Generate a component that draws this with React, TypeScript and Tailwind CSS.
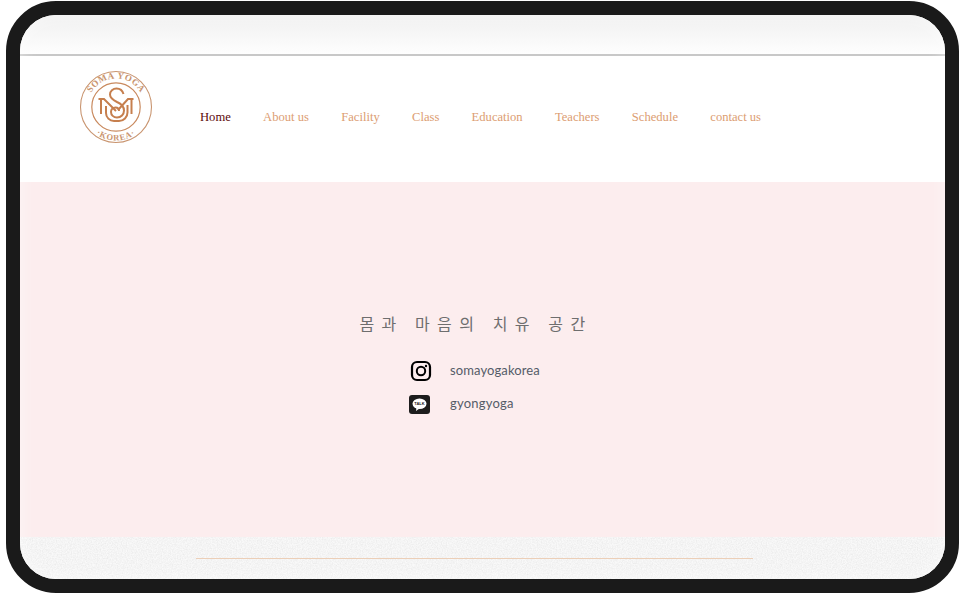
const navItems = ["About us", "Facility", "Class", "Education", "Teachers", "Schedule", "contact us"];

function Logo() {
  return (
    <svg width="76" height="76" viewBox="0 0 76 76" fill="none" stroke="#c99570" className="block">
      <defs>
        <path id="topArc" d="M 9.5 38 A 28.5 28.5 0 0 1 66.5 38" />
        <path id="botArc" d="M 4.5 38 A 33.5 33.5 0 0 0 71.5 38" />
      </defs>
      <circle cx="38" cy="38" r="35.5" strokeWidth="1.1" />
      <circle cx="38" cy="38" r="24.2" strokeWidth="1.2" stroke="#c98a5f" />
      <text fontFamily="'Liberation Serif', serif" fontSize="9" fontWeight="700" fill="#c99570" stroke="none" letterSpacing="0.5">
        <textPath href="#topArc" startOffset="50%" textAnchor="middle">SOMA YOGA</textPath>
      </text>
      <text fontFamily="'Liberation Serif', serif" fontSize="8.5" fontWeight="700" fill="#c99570" stroke="none" letterSpacing="0.8">
        <textPath href="#botArc" startOffset="50%" textAnchor="middle">·KOREA·</textPath>
      </text>
      <g stroke="#c67f4e" strokeWidth="2">
        <path d="M20.5 30 H26 L38 42 M23 30 V45 M55.5 30 H50 L40 41 M53.5 30 V45" />
        <path d="M28 37 V44 A8 8 0 0 0 36 52 H41 A8.5 8.5 0 0 0 49.5 43.5 V36" />
        <path d="M45.5 25 C44.5 21.5 42 19.5 38.5 19.5 C35 19.5 32 22 32 25.5 C32 29 35 31 39 33 C43.5 35 46 38 46 41.5 C46 45.5 43 48.5 39 48.5 C35.5 48.5 33 46 33 43 C33 40.5 35 38.5 37.5 38.5 C39.5 38.5 41 40 41 42" />
      </g>
    </svg>
  );
}

function Instagram() {
  return (
    <svg width="22" height="22" viewBox="0 0 22 22" fill="none" stroke="#000" className="block">
      <rect x="2" y="2" width="18" height="18" rx="5" strokeWidth="2.2" />
      <circle cx="11" cy="11" r="4.2" strokeWidth="2" />
      <circle cx="16" cy="6" r="1.2" fill="#000" stroke="none" />
    </svg>
  );
}

function Kakao() {
  return (
    <div className="relative w-[21px] h-[19px] rounded-[3px] bg-[#1d1d1d]">
      <svg width="21" height="19" viewBox="0 0 21 19" className="block">
        <ellipse cx="10.5" cy="8.8" rx="7" ry="5.3" fill="#fff" />
        <path d="M7.5 12.5 L7 16 L10.5 13.5 Z" fill="#fff" />
        <text x="10.5" y="10.3" textAnchor="middle" fontSize="4" fontWeight="700" fontFamily="'Liberation Sans', sans-serif" fill="#1d1d1d">TALK</text>
      </svg>
    </div>
  );
}

export default function App() {
  return (
    <div className="w-[966px] h-[597px] bg-white pt-px pl-[6px] overflow-hidden">
      <div className="relative w-[953px] h-[592px] rounded-[50px] border-[14px] border-[#1a1a1a] overflow-hidden bg-white flex flex-col">
        <div className="h-[39px] shrink-0 bg-gradient-to-b from-[#f0f0f0] to-[#fefefe]" />
        <div className="h-[2px] shrink-0 bg-[#c8c8c8]" />
        <div className="h-[126px] shrink-0 bg-white flex items-start pl-[58px] pt-[13px]">
          <Logo />
          <nav className="flex items-center gap-[32.3px] ml-[46px] mt-[38px] text-[12.6px] leading-[20px] text-[#dc9d72] font-['Liberation_Serif',serif]">
            <span className="text-[#5c0a0a]">Home</span>
            {navItems.map((n) => (
              <span key={n}>{n}</span>
            ))}
          </nav>
        </div>
        <div className="h-[355px] shrink-0 bg-[#fcedee] flex flex-col items-center pr-[13px] pt-[127px]">
          <h1 className="text-[16px] leading-[28px] font-normal tracking-[7.5px] text-[#6e6e6e] whitespace-pre font-['Noto_Sans_CJK_KR',sans-serif]">
            몸과 마음의 치유 공간
          </h1>
          <div className="flex flex-col gap-[11px] mt-[23px] w-[130px] -translate-x-[2px]">
            <div className="flex items-center h-[22px] whitespace-nowrap">
              <div className="w-[41px] shrink-0 pl-px"><Instagram /></div>
              <span className="text-[13px] tracking-[0.1px] text-[#555c68] font-['Lato',sans-serif]">somayogakorea</span>
            </div>
            <div className="flex items-center h-[22px] whitespace-nowrap">
              <div className="w-[41px] shrink-0"><Kakao /></div>
              <span className="text-[13px] tracking-[0.2px] text-[#555c68] font-['Lato',sans-serif]">gyongyoga</span>
            </div>
          </div>
        </div>
        <div className="relative flex-1 bg-[#f9f9f9] pt-[21px] pl-[176px]">
          <svg className="absolute inset-0 w-full h-full" aria-hidden="true">
            <filter id="grain" x="0" y="0" width="100%" height="100%">
              <feTurbulence type="fractalNoise" baseFrequency="0.8" numOctaves="2" />
              <feColorMatrix type="matrix" values="0 0 0 0 0  0 0 0 0 0  0 0 0 0 0  0 0 0 0.1 -0.03" />
            </filter>
            <rect width="100%" height="100%" filter="url(#grain)" />
          </svg>
          <div className="relative w-[557px] h-px bg-[#eccfb8]" />
        </div>
        <div className="absolute inset-0 rounded-[36px] pointer-events-none shadow-[inset_0_0_18px_rgba(255,255,255,0.55)]" />
      </div>
    </div>
  );
}
